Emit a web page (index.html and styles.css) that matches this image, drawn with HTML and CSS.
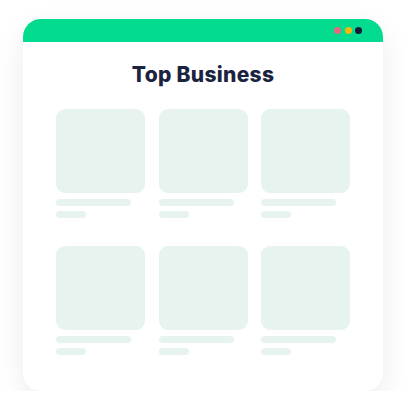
FILE: index.html
```html
<!DOCTYPE html>
<html lang="en">
<head>
<meta charset="UTF-8" />
<meta name="viewport" content="width=device-width, initial-scale=1" />
<title>Top Business</title>
<link rel="stylesheet" href="styles.css">
</head>
<body>
<div class="window">
  <div class="window-bar">
    <span class="dot dot-red"></span>
    <span class="dot dot-yellow"></span>
    <span class="dot dot-dark"></span>
  </div>
  <h1 class="title">Top Business</h1>
  <div class="grid">
    <div class="item"><div class="thumb"></div><div class="line line-long"></div><div class="line line-short"></div></div>
    <div class="item"><div class="thumb"></div><div class="line line-long"></div><div class="line line-short"></div></div>
    <div class="item"><div class="thumb"></div><div class="line line-long"></div><div class="line line-short"></div></div>
    <div class="item"><div class="thumb"></div><div class="line line-long"></div><div class="line line-short"></div></div>
    <div class="item"><div class="thumb"></div><div class="line line-long"></div><div class="line line-short"></div></div>
    <div class="item"><div class="thumb"></div><div class="line line-long"></div><div class="line line-short"></div></div>
  </div>
</div>
</body>
</html>
```

FILE: styles.css
```css
:root {
  --green: #03dc8f;
  --skeleton: #e7f3ef;
  --navy: #1a2340;
}
* {
  box-sizing: border-box;
}
body {
  margin: 0;
  background: #ffffff;
  font-family: 'Inter', 'Open Sans', sans-serif;
}
.window {
  width: 360px;
  height: 372px;
  margin: 19px 0 0 23px;
  background: #ffffff;
  border-radius: 18px;
  overflow: hidden;
  box-shadow: 0 10px 30px rgba(20, 30, 60, 0.08);
}
.window-bar {
  height: 23px;
  background: var(--green);
  display: flex;
  justify-content: flex-end;
  align-items: center;
  gap: 3.5px;
  padding-right: 21px;
}
.dot {
  width: 7px;
  height: 7px;
  border-radius: 50%;
}
.dot-red { background: #e8687b; }
.dot-yellow { background: #f4b80c; }
.dot-dark { background: #141a38; }
.title {
  margin: 0;
  padding-top: 20px;
  text-align: center;
  font-size: 21px;
  line-height: 26px;
  font-weight: 800;
  color: var(--navy);
  letter-spacing: 0.3px;
}
.grid {
  display: grid;
  grid-template-columns: repeat(3, 89px);
  column-gap: 13.5px;
  row-gap: 28px;
  padding: 21px 33px 0;
}
.thumb {
  height: 84px;
  border-radius: 9px;
  background: var(--skeleton);
}
.line {
  height: 7px;
  border-radius: 4px;
  background: var(--skeleton);
}
.line-long {
  width: 75px;
  margin-top: 6px;
}
.line-short {
  width: 30px;
  margin-top: 5px;
}
```
